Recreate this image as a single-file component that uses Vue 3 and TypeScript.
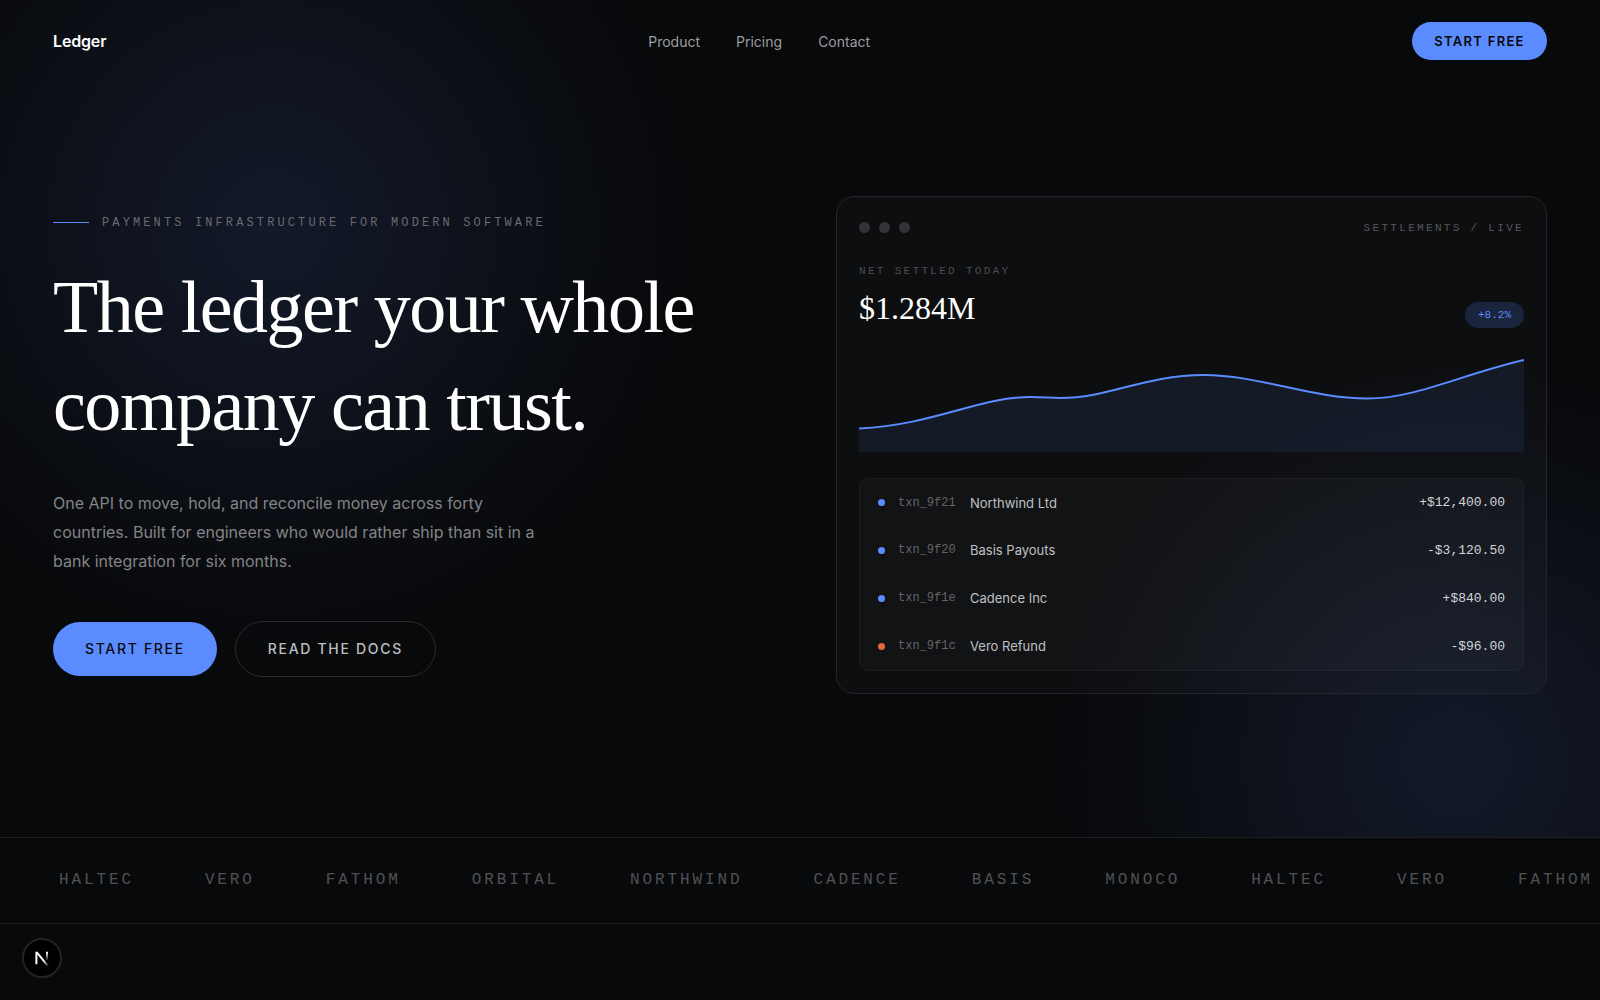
<script setup lang="ts">
interface Transaction {
  id: string
  name: string
  amount: string
  refund?: boolean
}

const links: string[] = ['Product', 'Pricing', 'Contact']

const transactions: Transaction[] = [
  { id: 'txn_9f21', name: 'Northwind Ltd', amount: '+$12,400.00' },
  { id: 'txn_9f20', name: 'Basis Payouts', amount: '-$3,120.50' },
  { id: 'txn_9f1e', name: 'Cadence Inc', amount: '+$840.00' },
  { id: 'txn_9f1c', name: 'Vero Refund', amount: '-$96.00', refund: true },
]

const brands: string[] = ['Haltec', 'Vero', 'Fathom', 'Orbital', 'Northwind', 'Cadence', 'Basis', 'Monoco']
const ticker: string[] = [...brands, ...brands.slice(0, 3)]

const curve =
  'M0 83.5C75 80 120 52 171 52C185 52 190 53 201 53C250 53 285 30 344 30C400 30 450 53.5 508 53.5C555 53.5 600 30 664 15'
</script>

<template>
  <div class="page">
    <div class="stage">
      <header class="topbar">
        <a class="logo" href="#">Ledger</a>
        <nav class="links" aria-label="Main">
          <a v-for="link in links" :key="link" href="#">{{ link }}</a>
        </nav>
        <button class="button small primary" type="button">START FREE</button>
      </header>

      <main class="hero">
        <section class="intro">
          <p class="eyebrow"><span class="rule"></span>PAYMENTS INFRASTRUCTURE FOR MODERN SOFTWARE</p>
          <h1>The ledger your whole<br />company can trust.</h1>
          <p class="lead">
            One API to move, hold, and reconcile money across forty countries. Built for engineers who would rather
            ship than sit in a bank integration for six months.
          </p>
          <div class="actions">
            <button class="button large primary" type="button">START FREE</button>
            <button class="button large outline" type="button">READ THE DOCS</button>
          </div>
        </section>

        <section class="card" aria-label="Settlements">
          <div class="card-head">
            <div class="dots"><i></i><i></i><i></i></div>
            <span class="label">SETTLEMENTS / LIVE</span>
          </div>
          <div class="stat">
            <div>
              <div class="label dim">NET SETTLED TODAY</div>
              <div class="value">$1.284M</div>
            </div>
            <span class="pill">+8.2%</span>
          </div>
          <svg class="chart" viewBox="0 0 664 107" preserveAspectRatio="none" aria-hidden="true">
            <path class="area" :d="curve + 'V107H0Z'" />
            <path class="line" :d="curve" vector-effect="non-scaling-stroke" />
          </svg>
          <div class="ledger">
            <table>
              <tbody>
                <tr v-for="txn in transactions" :key="txn.id">
                  <td class="status"><span :class="{ refund: txn.refund }"></span></td>
                  <td class="id">{{ txn.id }}</td>
                  <td class="name">{{ txn.name }}</td>
                  <td class="amount">{{ txn.amount }}</td>
                </tr>
              </tbody>
            </table>
          </div>
        </section>
      </main>
    </div>

    <div class="ticker">
      <span v-for="(brand, i) in ticker" :key="i">{{ brand.toUpperCase() }}</span>
    </div>

    <button class="dev" type="button" aria-label="Open developer tools">
      <svg width="18" height="18" viewBox="0 0 18 18" fill="none">
        <defs>
          <linearGradient id="diag" x1="9" y1="9" x2="15" y2="17" gradientUnits="userSpaceOnUse">
            <stop offset="0.3" stop-color="#fff" />
            <stop offset="1" stop-color="#fff" stop-opacity="0.1" />
          </linearGradient>
          <linearGradient id="stem" x1="14" y1="3" x2="14" y2="12" gradientUnits="userSpaceOnUse">
            <stop stop-color="#fff" />
            <stop offset="1" stop-color="#fff" stop-opacity="0" />
          </linearGradient>
        </defs>
        <path d="M2.4 15.3V2.8H4.6L16.2 17L14.4 18L4.4 5.6V15.3Z" fill="url(#diag)" />
        <path d="M13 2.8H15V11.4H13Z" fill="url(#stem)" />
      </svg>
    </button>
  </div>
</template>

<style>
body {
  background: #08090b;
}
</style>

<style scoped>
.page {
  min-height: 100vh;
  overflow: hidden;
  background: #08090b;
  color: #fff;
  font-family: Inter, "Liberation Sans", sans-serif;
}

.page * {
  box-sizing: border-box;
}

.stage {
  background:
    radial-gradient(circle at 17% 27%, rgba(91, 140, 255, 0.12) 0, rgba(91, 140, 255, 0.08) 160px, rgba(91, 140, 255, 0.03) 300px, transparent 420px),
    radial-gradient(circle at 91% 91%, rgba(91, 140, 255, 0.12) 0, rgba(91, 140, 255, 0.08) 150px, rgba(91, 140, 255, 0.03) 290px, transparent 400px);
}

a {
  color: inherit;
  text-decoration: none;
}

p,
h1 {
  margin: 0;
}

.topbar {
  display: flex;
  align-items: center;
  justify-content: space-between;
  padding: 22px 53px;
}

.logo {
  font-size: 16px;
  font-weight: 600;
  letter-spacing: -0.01em;
}

.links {
  display: flex;
  gap: 36px;
  font-size: 14px;
  color: #9c9d9e;
}

.button {
  border: 0;
  border-radius: 28px;
  padding: 0;
  font-family: inherit;
  text-align: center;
  cursor: pointer;
}

.small {
  width: 135px;
  height: 38px;
  font-size: 13px;
  font-weight: 600;
  letter-spacing: 0.1em;
}

.large {
  height: 54px;
  padding: 0 32px;
  font-size: 14px;
  font-weight: 500;
  letter-spacing: 0.12em;
}

.primary {
  background: #5b8cff;
  color: #08090b;
}

.outline {
  height: 56px;
  border: 1px solid #2a2b2d;
  background: transparent;
  color: #bdbebf;
}

.hero {
  display: grid;
  grid-template-columns: 1fr 1fr;
  align-items: center;
  gap: 72px;
  padding: 114px 53px 143px;
}

.eyebrow {
  display: flex;
  align-items: center;
  gap: 13px;
  margin-bottom: 26px;
  font: 12px/18px "Liberation Mono", monospace;
  letter-spacing: 0.26em;
  white-space: nowrap;
  color: #696a70;
}

.rule {
  width: 36px;
  height: 1px;
  background: #5b8cff;
}

h1 {
  font: 400 74px/98px "Liberation Serif", serif;
  letter-spacing: -0.02em;
  white-space: nowrap;
}

.lead {
  max-width: 500px;
  margin-top: 35px;
  font-size: 16px;
  line-height: 29px;
  color: #838486;
}

.actions {
  display: flex;
  align-items: center;
  gap: 18px;
  margin-top: 45px;
}

.card {
  padding: 22px;
  border: 1px solid #242629;
  border-radius: 18px;
  background: rgba(255, 255, 255, 0.024);
}

.card-head {
  display: flex;
  align-items: center;
  justify-content: space-between;
  height: 17px;
}

.dots {
  display: flex;
  gap: 9px;
}

.dots i {
  width: 11px;
  height: 11px;
  border-radius: 50%;
  background: #333437;
}

.label {
  font: 11px/16px "Liberation Mono", monospace;
  letter-spacing: 0.21em;
  color: #55565a;
}

.label.dim {
  color: #4c4d50;
}

.stat {
  display: flex;
  align-items: flex-end;
  justify-content: space-between;
  margin-top: 27px;
}

.value {
  margin-top: 9px;
  font: 32px/40px "Liberation Serif", serif;
}

.pill {
  padding: 0 13px;
  border-radius: 13px;
  background: #1a243d;
  font: 11px/26px "Liberation Mono", monospace;
  color: #5b8cff;
}

.chart {
  display: block;
  width: 100%;
  height: 107px;
  margin-top: 17px;
}

.area {
  fill: rgba(91, 140, 255, 0.09);
}

.line {
  fill: none;
  stroke: #5b8cff;
  stroke-width: 2;
}

.ledger {
  margin-top: 26px;
  padding: 0 18px;
  border: 1px solid rgba(255, 255, 255, 0.04);
  border-radius: 9px;
  background: rgba(255, 255, 255, 0.024);
}

table {
  width: 100%;
  border-collapse: collapse;
}

td {
  height: 47px;
  padding: 0;
  font-size: 13px;
  color: #bfc0c2;
}

tr + tr td {
  height: 48px;
}

.status {
  width: 20px;
}

.status span {
  display: block;
  width: 7px;
  height: 7px;
  border-radius: 50%;
  background: #5b8cff;
}

.status .refund {
  background: #e0693a;
}

.id {
  width: 72px;
  font: 12px "Liberation Mono", monospace;
  color: #646568;
}

.amount {
  font: 13px "Liberation Mono", monospace;
  text-align: right;
  color: #d3d4d8;
}

.ticker {
  display: flex;
  gap: 71px;
  overflow: hidden;
  padding-left: 59px;
  border-top: 1px solid #1d1f21;
  border-bottom: 1px solid #1d1f21;
  font: 16px/85px "Liberation Mono", monospace;
  letter-spacing: 0.18em;
  color: #505154;
}

.dev {
  position: fixed;
  bottom: 22px;
  left: 22px;
  display: grid;
  place-items: center;
  width: 40px;
  height: 40px;
  padding: 0;
  border: 2px solid #222322;
  border-radius: 50%;
  background: #000;
}
</style>
